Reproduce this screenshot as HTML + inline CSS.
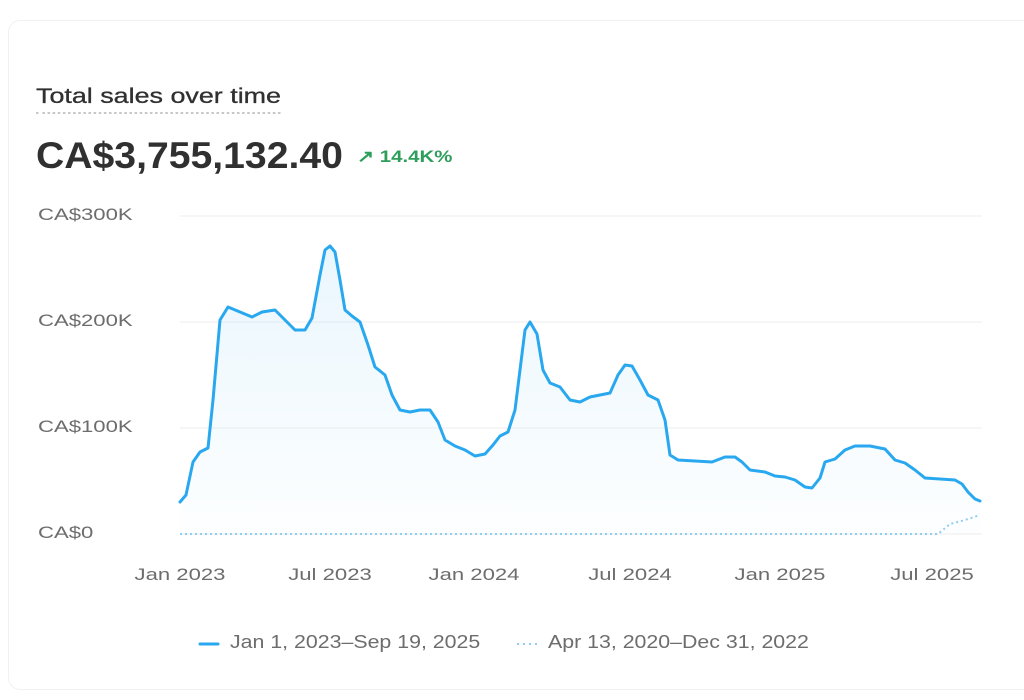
<!DOCTYPE html>
<html><head><meta charset="utf-8"><style>
body{margin:0;width:1024px;height:700px;background:#fff;font-family:"Liberation Sans",sans-serif;position:relative;overflow:hidden}
.card{position:absolute;left:8px;top:20px;width:1030px;height:668px;border:1px solid #f1f1f1;border-radius:12px}
.s{transform-origin:0 0;white-space:nowrap}
.t{position:absolute;left:36px;top:85px;font-size:21px;color:#303030;padding-bottom:3px;border-bottom:2px dotted #c8c8c8;transform:scaleX(1.28);-webkit-text-stroke:0.3px #303030}
.v{position:absolute;left:36px;top:135px;font-size:37px;font-weight:bold;color:#303030;transform:scaleX(1.058)}
.p{position:absolute;left:357px;top:147px;font-size:17px;font-weight:bold;color:#2e9e5b;transform:scaleX(1.2)}
.yl{position:absolute;left:38px;font-size:17px;color:#6d6d6d;transform:scaleX(1.3)}
.xl{position:absolute;top:565px;font-size:17px;color:#6d6d6d;transform:translateX(-50%) scaleX(1.3);transform-origin:50% 0}
.lg{position:absolute;top:632px;font-size:18px;color:#6d6d6d;transform:scaleX(1.185)}
</style></head><body>
<div class="card"></div>
<div class="t s">Total sales over time</div>
<div class="v s">CA$3,755,132.40</div>
<div class="p s">↗ 14.4K%</div>
<div class="yl s" style="top:205px">CA$300K</div>
<div class="yl s" style="top:311px">CA$200K</div>
<div class="yl s" style="top:417px">CA$100K</div>
<div class="yl s" style="top:523px">CA$0</div>
<svg style="position:absolute;left:0;top:0" width="1024" height="700">
<defs><linearGradient id="g" x1="0" y1="0" x2="0" y2="1"><stop offset="0" stop-color="#29a8ef" stop-opacity="0.1"/><stop offset="1" stop-color="#29a8ef" stop-opacity="0.01"/></linearGradient></defs>
<g stroke="#eeeeee" stroke-width="1"><line x1="180" y1="216" x2="982" y2="216"/><line x1="180" y1="322" x2="982" y2="322"/><line x1="180" y1="428" x2="982" y2="428"/><line x1="180" y1="534" x2="982" y2="534"/></g>
<polygon fill="url(#g)" points="180,534 180,502 186,495 193,462 200,452 208,448 213,400 220,320 228,307 240,312 252,317 262,312 275,310 285,320 295,330 305,330 312,318 320,275 325,250 330,246 335,252 340,280 345,310 352,316 360,322 368,345 375,367 385,375 392,395 400,410 410,412 420,410 430,410 438,422 445,440 455,446 465,450 475,456 485,454 493,445 500,436 508,432 515,410 520,370 525,330 530,322 537,334 543,370 550,383 560,387 570,400 580,402 590,397 600,395 610,393 618,375 625,365 632,366 640,380 648,395 658,400 665,420 670,455 678,460 695,461 712,462 725,457 735,457 742,462 750,470 765,472 775,476 785,477 795,480 805,487 812,488 820,478 825,462 835,459 845,450 855,446 870,446 885,449 895,460 905,463 915,470 925,478 940,479 955,480 962,484 968,492 975,499 980,501 980,534"/>
<polyline fill="none" stroke="#29a8ef" stroke-width="3" stroke-linejoin="round" stroke-linecap="round" points="180,502 186,495 193,462 200,452 208,448 213,400 220,320 228,307 240,312 252,317 262,312 275,310 285,320 295,330 305,330 312,318 320,275 325,250 330,246 335,252 340,280 345,310 352,316 360,322 368,345 375,367 385,375 392,395 400,410 410,412 420,410 430,410 438,422 445,440 455,446 465,450 475,456 485,454 493,445 500,436 508,432 515,410 520,370 525,330 530,322 537,334 543,370 550,383 560,387 570,400 580,402 590,397 600,395 610,393 618,375 625,365 632,366 640,380 648,395 658,400 665,420 670,455 678,460 695,461 712,462 725,457 735,457 742,462 750,470 765,472 775,476 785,477 795,480 805,487 812,488 820,478 825,462 835,459 845,450 855,446 870,446 885,449 895,460 905,463 915,470 925,478 940,479 955,480 962,484 968,492 975,499 980,501"/>
<polyline fill="none" stroke="#8fcdf2" stroke-width="2" stroke-dasharray="2 3" points="180,534 938,534 950,524 965,520 980,515"/>
<line x1="200" y1="644" x2="218" y2="644" stroke="#29a8ef" stroke-width="3" stroke-linecap="round"/>
<line x1="517" y1="644" x2="537" y2="644" stroke="#8fcdf2" stroke-width="2" stroke-dasharray="2 4"/>
</svg>
<div class="xl" style="left:180px">Jan 2023</div>
<div class="xl" style="left:330px">Jul 2023</div>
<div class="xl" style="left:474px">Jan 2024</div>
<div class="xl" style="left:630px">Jul 2024</div>
<div class="xl" style="left:780px">Jan 2025</div>
<div class="xl" style="left:932px">Jul 2025</div>
<div class="lg s" style="left:230px">Jan 1, 2023–Sep 19, 2025</div>
<div class="lg s" style="left:548px">Apr 13, 2020–Dec 31, 2022</div>
</body></html>
